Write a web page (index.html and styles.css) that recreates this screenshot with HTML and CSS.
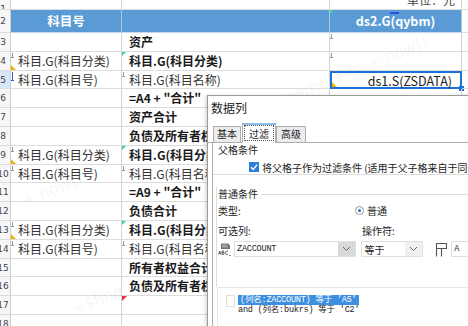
FILE: index.html
```html
<!DOCTYPE html>
<html lang="zh">
<head>
  <meta charset="UTF-8">
  <title>报表设计 - 数据列</title>
  <link rel="stylesheet" href="styles.css">
</head>
<body>
  <div class="sheet">
    <div class="rh top"><span>1</span></div>
    <div class="c top"></div>
    <div class="c top"></div>
    <div class="c top right"><span class="unit">单位：元</span></div>
    <div class="c top rest"></div>

    <div class="rh head"><span>2</span></div>
    <div class="c head center">科目号</div>
    <div class="c head"></div>
    <div class="c head center"><i class="mark mint"></i><i class="arrow-r"></i>ds2.G(qybm)</div>
    <div class="c rest"></div>

    <div class="rh"><span>3</span></div>
    <div class="c"></div>
    <div class="c b">资产</div>
    <div class="c"><i class="tick"></i></div>
    <div class="c rest"></div>

    <div class="rh"><span>4</span></div>
    <div class="c"><i class="tick"></i><i class="mark yellow"></i>科目.G(科目分类)</div>
    <div class="c b"><i class="mark mint"></i>科目.G(科目分类)</div>
    <div class="c"><i class="tick"></i></div>
    <div class="c rest"></div>

    <div class="rh sel"><span>5</span></div>
    <div class="c"><i class="tick blue"></i>科目.G(科目号)</div>
    <div class="c"><i class="tick"></i>科目.G(科目名称)</div>
    <div class="c current">ds1.S(ZSDATA)<i class="mark yellow"></i><i class="handle"></i></div>
    <div class="c rest"></div>

    <div class="rh"><span>6</span></div>
    <div class="c"></div>
    <div class="c b">=A4 + "合计"</div>
    <div class="c"></div>
    <div class="c rest"></div>

    <div class="rh"><span>7</span></div>
    <div class="c"></div>
    <div class="c b">资产合计</div>
    <div class="c"></div>
    <div class="c rest"></div>

    <div class="rh"><span>8</span></div>
    <div class="c"></div>
    <div class="c b">负债及所有者权益</div>
    <div class="c"></div>
    <div class="c rest"></div>

    <div class="rh"><span>9</span></div>
    <div class="c"><i class="tick"></i><i class="mark yellow"></i>科目.G(科目分类)</div>
    <div class="c b"><i class="mark mint"></i>科目.G(科目分类)</div>
    <div class="c"></div>
    <div class="c rest"></div>

    <div class="rh"><span>10</span></div>
    <div class="c"><i class="tick"></i>科目.G(科目号)</div>
    <div class="c"><i class="tick"></i>科目.G(科目名称)</div>
    <div class="c"></div>
    <div class="c rest"></div>

    <div class="rh"><span>11</span></div>
    <div class="c"></div>
    <div class="c b">=A9 + "合计"</div>
    <div class="c"></div>
    <div class="c rest"></div>

    <div class="rh"><span>12</span></div>
    <div class="c"></div>
    <div class="c b">负债合计</div>
    <div class="c"></div>
    <div class="c rest"></div>

    <div class="rh"><span>13</span></div>
    <div class="c"><i class="tick"></i><i class="mark yellow"></i>科目.G(科目分类)</div>
    <div class="c b"><i class="mark mint"></i>科目.G(科目分类)</div>
    <div class="c"></div>
    <div class="c rest"></div>

    <div class="rh"><span>14</span></div>
    <div class="c"><i class="tick"></i>科目.G(科目号)</div>
    <div class="c"><i class="tick"></i>科目.G(科目名称)</div>
    <div class="c"></div>
    <div class="c rest"></div>

    <div class="rh"><span>15</span></div>
    <div class="c"></div>
    <div class="c b">所有者权益合计</div>
    <div class="c"></div>
    <div class="c rest"></div>

    <div class="rh"><span>16</span></div>
    <div class="c"></div>
    <div class="c b">负债及所有者权益</div>
    <div class="c"></div>
    <div class="c rest"></div>

    <div class="rh"><span>17</span></div>
    <div class="c"></div>
    <div class="c"><i class="mark red"></i></div>
    <div class="c"></div>
    <div class="c rest"></div>

    <div class="rh"><span>18</span></div>
    <div class="c"></div>
    <div class="c"></div>
    <div class="c"></div>
    <div class="c rest"></div>
  </div>

  <div class="wm wm1">+ now()</div>
  <div class="wm wm2">=$fine</div>
  <div class="wm wm3">name + "" + now()</div>

  <div class="dialog">
    <div class="dlg-title">数据列</div>
    <div class="tabs">
      <div class="tab">基本</div>
      <div class="tab active">过滤</div>
      <div class="tab">高级</div>
    </div>
    <div class="panel">
      <div class="group parent">
        <div class="group-label">父格条件</div>
        <div class="check">
          <span class="box"><svg width="10" height="10" viewBox="0 0 10 10"><path d="M2 5.2 L4.2 7.4 L8.2 2.6" fill="none" stroke="#fff" stroke-width="1.4"/></svg></span>
          <span>将父格子作为过滤条件 (适用于父子格来自于同一数据集)</span>
        </div>
      </div>

      <div class="group normal">
        <div class="group-label"><span>普通条件</span></div>
        <div class="line type-line">
          <span class="field-label">类型:</span>
          <span class="radio-item"><span class="radio"></span>普通</span>
        </div>
        <div class="line labels">
          <span class="field-label">可选列:</span>
          <span>操作符:</span>
        </div>
        <div class="line combos">
          <svg class="col-icon" width="14" height="15" viewBox="0 0 14 15">
            <path d="M3 1.5 h7 l2 2 v3.5 h-9 z" fill="#6f6f6f"/>
            <path d="M4 3 h5 M4 4.8 h6" stroke="#d8d8d8" stroke-width="0.8"/>
            <path d="M0.5 12.5 l1.2 -3.5 l1.2 3.5 M1 11.4 h1.4 M4 9 v3.5 h1.3 a0.9 0.9 0 0 0 0 -1.8 h-1.3 M4 9 h1.1 a0.8 0.8 0 0 1 0 1.7 M10 9.3 a1.7 1.7 0 1 0 0 2.9" fill="none" stroke="#444" stroke-width="0.8"/>
            <path d="M11 13 l1 1.3 l1 -1.3" fill="#444"/>
          </svg>
          <div class="combo col"><span class="val mono">ZACCOUNT</span><span class="drop"><svg width="9" height="6" viewBox="0 0 9 6"><path d="M1 1 L4.5 4.5 L8 1" fill="none" stroke="#666"/></svg></span></div>
          <div class="combo op"><span class="val">等于</span><span class="drop light"><svg width="9" height="6" viewBox="0 0 9 6"><path d="M1 1 L4.5 4.5 L8 1" fill="none" stroke="#666"/></svg></span></div>
          <svg class="val-icon" width="13" height="15" viewBox="0 0 13 15">
            <path d="M1 1.5 h11 M1 6.5 h11 M1.5 1.5 v13 M6.5 6.5 v8 M11.5 1.5 v5" fill="none" stroke="#555" stroke-width="1.1"/>
          </svg>
          <div class="combo val-box"><span class="val mono">A</span></div>
        </div>
      </div>

      <div class="cond-list">
        <span class="row-box"></span>
        <div class="cond sel mono">(列名:ZACCOUNT) 等于 'A5'</div>
        <div class="cond mono">and (列名:bukrs) 等于 'C2'</div>
      </div>
    </div>
  </div>
</body>
</html>
```

FILE: styles.css
```css
* {
  box-sizing: border-box;
}

body {
  margin: 0;
  width: 468px;
  height: 326px;
  overflow: hidden;
  background: #fff;
  color: #222;
  font-family: "Noto Sans CJK SC", "Noto Sans", sans-serif;
  font-size: 12px;
  position: relative;
}

/* spreadsheet */
.sheet {
  display: grid;
  grid-template-columns: 11px 111px 208px 132px 6px;
  grid-template-rows: 10px 23px;
  grid-auto-rows: 18.8px;
}

.c {
  border-right: 1px solid #d4d4d4;
  border-bottom: 1px solid #dcdcdc;
  padding-left: 7px;
  line-height: 18px;
  white-space: nowrap;
  overflow: hidden;
  position: relative;
  color: #333;
}

.c.rest {
  border-right: none;
}

.c.b {
  font-weight: bold;
  color: #1a1a1a;
}

.c.center {
  text-align: center;
  padding-left: 0;
}

.c.right {
  text-align: right;
  padding-right: 6px;
}

.unit {
  display: block;
  margin-top: -9px;
  color: #444;
}

.c.head {
  background: #5b9bd5;
  color: #fff;
  font-weight: bold;
  font-size: 12.5px;
  line-height: 22px;
  border-right-color: #a9c6e6;
  border-bottom-color: #c8d8ea;
}

.rh {
  border-right: 1px solid #cfcfcf;
  border-bottom: 1px solid #dcdcdc;
  background: #f7f7f7;
  overflow: hidden;
  font-family: "DejaVu Sans", sans-serif;
  font-size: 9px;
  color: #444;
  line-height: 18px;
}

.rh span {
  display: block;
  width: 18px;
  margin-left: -6px;
  text-align: center;
}

.rh.head {
  line-height: 22px;
}

.rh.sel {
  background: #d6e8f8;
}

.c.current {
  border: 2px solid #1d72d8;
  text-align: right;
  padding-right: 8px;
  line-height: 15px;
  color: #222;
  overflow: visible;
  font-size: 12.5px;
}

.handle {
  position: absolute;
  right: -4px;
  bottom: -4px;
  width: 5px;
  height: 5px;
  background: #1d72d8;
}

/* cell markers */
.mark {
  position: absolute;
  width: 0;
  height: 0;
}

.mark.yellow {
  left: 0;
  bottom: 0;
  border-bottom: 5px solid #f0b400;
  border-right: 5px solid transparent;
}

.mark.mint {
  left: 0;
  top: 0;
  border-top: 4px solid #3ccfa0;
  border-right: 4px solid transparent;
}

.mark.red {
  left: 0;
  top: 0;
  border-top: 5px solid #e8304a;
  border-right: 5px solid transparent;
}

.tick {
  position: absolute;
  left: 1px;
  top: 1px;
  width: 1px;
  height: 4px;
  background: #999;
}

.tick::after {
  content: "";
  position: absolute;
  left: -1px;
  bottom: -1px;
  width: 3px;
  height: 1px;
  background: #999;
}

.tick.blue {
  background: #2e5fd6;
  height: 8px;
}

.tick.blue::after {
  background: #2e5fd6;
}

.arrow-r {
  position: absolute;
  left: 60px;
  top: 2px;
  width: 9px;
  height: 2px;
  background: #2a4fe0;
}

/* watermark */
.wm {
  position: absolute;
  color: rgba(150, 150, 150, 0.1);
  font-family: "DejaVu Sans", sans-serif;
  font-size: 16px;
  transform: rotate(-22deg);
  pointer-events: none;
  white-space: nowrap;
}

.wm1 { left: 20px; top: 180px; }
.wm2 { left: 70px; top: 290px; }
.wm3 { left: 280px; top: 60px; }

/* dialog */
.dialog {
  position: absolute;
  left: 207px;
  top: 95px;
  width: 275px;
  height: 245px;
  background: #fff;
  border: 1px solid #9a9a9a;
  box-shadow: -1px 1px 4px rgba(0, 0, 0, 0.2);
  font-size: 10px;
}

.dlg-title {
  height: 27px;
  line-height: 24px;
  padding-left: 3px;
  font-size: 12px;
  color: #222;
}

.tabs {
  display: flex;
  align-items: flex-end;
  height: 20px;
  padding-left: 5px;
  border-bottom: 1px solid #adadad;
}

.tab {
  height: 16px;
  line-height: 14px;
  padding: 0 3px;
  border: 1px solid #adadad;
  border-bottom: none;
  background: #ececec;
  margin-right: -1px;
}

.tab:last-child {
  padding: 0 4px;
}

.tab.active {
  height: 20px;
  line-height: 17px;
  padding: 0 6px;
  background: #fff;
  margin: 0 0 -1px 2px;
  border-top: 2px solid #8cbbe8;
  outline: 1px dotted #555;
  outline-offset: -3px;
}

.panel {
  margin-left: 4px;
  border-left: 1px solid #adadad;
  height: 220px;
  background: #fff;
}

.group-label {
  height: 14px;
  line-height: 14px;
}

.group.parent {
  height: 32px;
  padding-left: 5px;
  border-bottom: 1px solid #dcdcdc;
}

.check {
  display: flex;
  align-items: center;
  gap: 3px;
  height: 12px;
  margin-top: 4px;
  padding-left: 31px;
  white-space: nowrap;
}

.box {
  width: 10px;
  height: 10px;
  flex: none;
  display: flex;
  background: #2b7fd8;
}

.group.normal {
  height: 100px;
  margin-top: 12px;
  margin-left: 3px;
  border-left: 1px solid #dcdcdc;
  padding-left: 1px;
}

.group.normal .group-label {
  display: flex;
  align-items: center;
  gap: 3px;
}

.group.normal .group-label::after {
  content: "";
  flex: 1;
  height: 1px;
  background: #dcdcdc;
}

.line {
  display: flex;
  align-items: center;
  white-space: nowrap;
}

.field-label {
  width: 144px;
  flex: none;
}

.type-line {
  margin-top: 2px;
  height: 14px;
}

.type-line .field-label {
  width: 140px;
}

.radio-item {
  display: flex;
  align-items: center;
  gap: 3px;
  margin-left: -3px;
}

.radio {
  width: 9px;
  height: 9px;
  border: 1px solid #9a9a9a;
  border-radius: 50%;
  display: flex;
  align-items: center;
  justify-content: center;
}

.radio::after {
  content: "";
  width: 3px;
  height: 3px;
  border-radius: 50%;
  background: #1c6fd6;
}

.labels {
  margin-top: 6px;
  height: 14px;
}

.combos {
  margin-top: 4px;
  height: 16px;
}

.col-icon {
  flex: none;
  margin-right: 2px;
}

.combo {
  display: flex;
  align-items: center;
  height: 16px;
  background: #fff;
  border: 1px solid #e0e0e0;
}

.combo .val {
  flex: 1;
  padding-left: 2px;
}

.combo .drop {
  width: 17px;
  height: 100%;
  background: #d9d9d9;
  display: flex;
  align-items: center;
  justify-content: center;
}

.combo .drop.light {
  background: #f0f0f0;
}

.combo.col {
  width: 123px;
}

.combo.op {
  width: 62px;
  margin-left: 5px;
}

.val-icon {
  flex: none;
  margin-left: 12px;
}

.combo.val-box {
  width: 30px;
  margin-left: 3px;
}

.mono {
  font-family: "Liberation Mono", "Noto Sans CJK SC", monospace;
  font-size: 8.5px;
  letter-spacing: -0.2px;
}

.cond-list {
  position: relative;
  height: 60px;
  margin-left: 4px;
  background: #fff;
  border-top: 1px solid #e6e6e6;
  border-left: 1px solid #e6e6e6;
  padding: 2px 0 0 20px;
}

.row-box {
  position: absolute;
  left: 8px;
  top: 7px;
  width: 9px;
  height: 12px;
  border: 1px solid #e0e0e0;
}

.cond {
  line-height: 10px;
  height: 10px;
  white-space: nowrap;
  color: #222;
}

.cond.sel {
  display: inline-block;
  background: #3d8fe0;
  color: #fff;
  padding: 0 2px;
}
```
